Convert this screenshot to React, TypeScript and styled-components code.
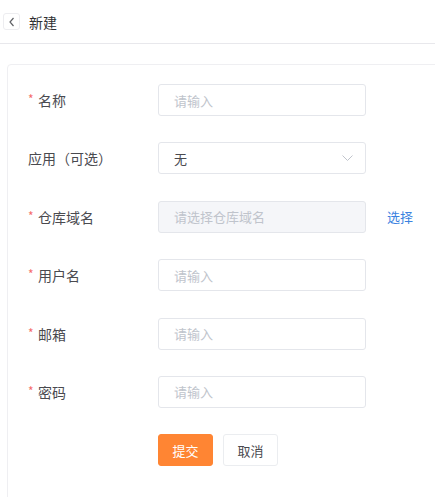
import React from "react";
import styled, { createGlobalStyle } from "styled-components";

const GlobalStyle = createGlobalStyle`
  html, body {
    margin: 0;
    padding: 0;
    background: #fff;
    overflow: hidden;
    font-family: "Noto Sans CJK SC", "Noto Sans", sans-serif;
  }
`;

const Header = styled.div`
  display: flex;
  align-items: center;
  height: 44px;
  padding-left: 3px;
  border-bottom: 1px solid #e8e8ec;
  box-sizing: border-box;
`;

const BackButton = styled.div`
  width: 17px;
  height: 17px;
  border: 1px solid #ededf0;
  border-radius: 3px;
  box-sizing: border-box;
  display: flex;
  align-items: center;
  justify-content: center;
  margin-right: 9px;
`;

const Title = styled.div`
  font-size: 14px;
  color: #303133;
  line-height: 20px;
`;

const Card = styled.div`
  margin: 20px -20px 0 7px;
  border: 1px solid #efeff2;
  border-radius: 4px;
  padding: 19px 0 40px 20px;
  min-height: 420px;
  box-sizing: border-box;
`;

const Row = styled.div`
  display: flex;
  align-items: center;
  height: 32px;
  margin-bottom: 26.4px;
`;

const Label = styled.div`
  width: 130px;
  font-size: 14px;
  color: #4a4a4f;
  display: flex;
  align-items: center;
`;

const Star = styled.span`
  color: #f56c6c;
  font-size: 12px;
  width: 10px;
  margin-top: -3px;
`;

const Field = styled.div<{ $disabled?: boolean }>`
  width: 208px;
  height: 32px;
  box-sizing: border-box;
  border: 1px solid #e4e6eb;
  border-radius: 3px;
  background: ${(p) => (p.$disabled ? "#f5f6f9" : "#fff")};
  display: flex;
  align-items: center;
  justify-content: space-between;
  padding: 0 12px 0 15px;
  font-size: 13px;
`;

const Placeholder = styled.span`
  color: #c0c4cc;
`;

const Value = styled.span`
  color: #4a4a4f;
`;

const Link = styled.span`
  margin-left: 21px;
  font-size: 13px;
  color: #3b82e0;
`;

const Button = styled.button<{ $primary?: boolean }>`
  width: 55px;
  height: 32px;
  box-sizing: border-box;
  border-radius: 3px;
  font-family: inherit;
  font-size: 13px;
  padding: 0;
  margin-right: 10px;
  border: 1px solid ${(p) => (p.$primary ? "#ff8533" : "#ebedf0")};
  background: ${(p) => (p.$primary ? "#ff8533" : "#fff")};
  color: ${(p) => (p.$primary ? "#fff" : "#4a4a4f")};
`;

const Actions = styled.div`
  display: flex;
  padding-left: 130px;
`;

const fields = [
  { label: "名称", required: true, placeholder: "请输入" },
  { label: "应用（可选）", required: false, value: "无", select: true },
  { label: "仓库域名", required: true, placeholder: "请选择仓库域名", disabled: true, link: "选择" },
  { label: "用户名", required: true, placeholder: "请输入" },
  { label: "邮箱", required: true, placeholder: "请输入" },
  { label: "密码", required: true, placeholder: "请输入" },
];

const App = () => (
  <>
    <GlobalStyle />
    <Header>
      <BackButton>
        <svg width="8" height="10" viewBox="0 0 8 10">
          <path d="M5.5 1 L2 5 L5.5 9" fill="none" stroke="#606266" strokeWidth="1.2" />
        </svg>
      </BackButton>
      <Title>新建</Title>
    </Header>
    <Card>
      {fields.map((f) => (
        <Row key={f.label}>
          <Label>
            {f.required && <Star>*</Star>}
            {f.label}
          </Label>
          <Field $disabled={f.disabled}>
            {f.value ? <Value>{f.value}</Value> : <Placeholder>{f.placeholder}</Placeholder>}
            {f.select && (
              <svg width="11" height="6" viewBox="0 0 11 6">
                <path d="M0.5 0.5 L5.5 5.5 L10.5 0.5" fill="none" stroke="#c0c4cc" strokeWidth="1" />
              </svg>
            )}
          </Field>
          {f.link && <Link>{f.link}</Link>}
        </Row>
      ))}
      <Actions>
        <Button $primary>提交</Button>
        <Button>取消</Button>
      </Actions>
    </Card>
  </>
);

export default App;
